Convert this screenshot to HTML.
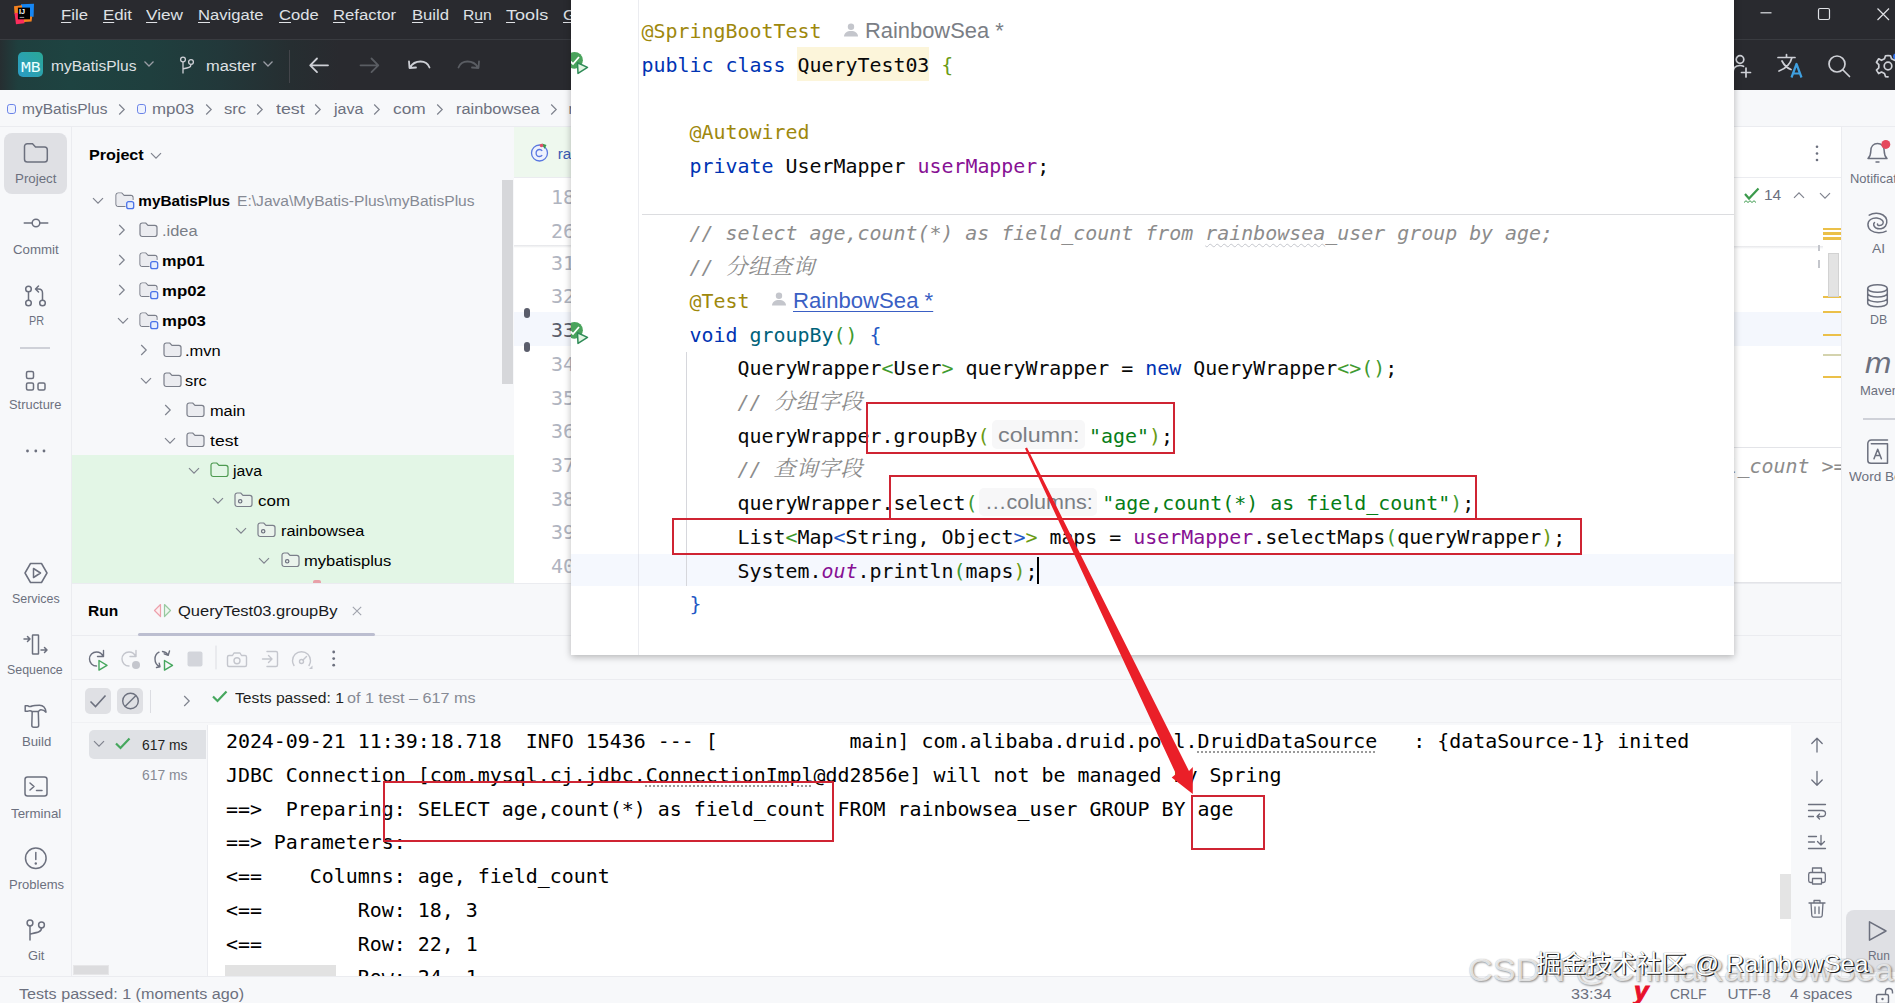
<!DOCTYPE html>
<html><head><meta charset="utf-8"><title>IDE</title>
<style>
*{box-sizing:border-box;margin:0;padding:0}
html,body{width:1895px;height:1003px;overflow:hidden;background:#f7f8fa;font-family:"Liberation Sans","Noto Sans CJK SC",sans-serif;}
#root{position:relative;width:1895px;height:1003px;overflow:hidden}
.abs{position:absolute}
.t{position:absolute;white-space:pre;line-height:1}
svg{position:absolute;overflow:visible}
.mono{font-family:"DejaVu Sans Mono","Noto Sans CJK SC",monospace;font-size:19.93px}
.an{color:#9e880d}.kw{color:#0033b3}.fd{color:#871094}.st{color:#067d17}.cm{color:#8c8c8c;font-style:italic}
.md{color:#00627a}.b1{color:#6a9b14}.b2{color:#2257c4}.b4{color:#3f9a2f}
</style></head><body><div id="root">
<div class="abs" style="left:0;top:0;width:1895px;height:90px;background:#292a2f"></div>
<div class="abs" style="left:0;top:39px;width:1895px;height:51px;background:linear-gradient(90deg,#262e31 0,#1f3f3e 18px,#1e4341 70px,#1f3f3e 150px,#22383a 220px,#262e31 290px,#292a2f 340px)"></div>
<div class="abs" style="left:0;top:39px;width:1895px;height:1px;background:#393b40"></div>
<svg style="left:0;top:0" width="40" height="30" viewBox="0 0 40 30">
<path d="M21 4.300L34 3.700L33.600 16.800L21 17.200Z" fill="#1687f5"/>
<path d="M14 6.300L22 5.300L22 14L14.600 13.800Z" fill="#f5821f"/>
<path d="M14.500 13L24.200 13L24.500 23.300L16 24.200Z" fill="#fc2d5c"/>
<path d="M24 17L32.200 16.500L31.600 21.600L24 22Z" fill="#f5821f"/>
<rect x="17.900" y="7.600" width="12.100" height="11.700" fill="#000"/>
<rect x="19.600" y="16.900" width="4.600" height="1" fill="#9a9a9a"/></svg>
<div class="t" style="left:19.0px;top:9px;font-size:6.5px;color:#fff;font-weight:bold;transform:scaleX(1.110);transform-origin:0 0;">IJ</div>
<div class="t" style="left:61.2px;top:7px;font-size:15.3px;color:#dfe1e5;transform:scaleX(1.091);transform-origin:0 0;text-underline-offset:2px;"><u>F</u>ile</div>
<div class="t" style="left:103.2px;top:7px;font-size:15.3px;color:#dfe1e5;transform:scaleX(1.101);transform-origin:0 0;text-underline-offset:2px;"><u>E</u>dit</div>
<div class="t" style="left:146.3px;top:7px;font-size:15.3px;color:#dfe1e5;transform:scaleX(1.126);transform-origin:0 0;text-underline-offset:2px;"><u>V</u>iew</div>
<div class="t" style="left:198.3px;top:7px;font-size:15.3px;color:#dfe1e5;transform:scaleX(1.085);transform-origin:0 0;text-underline-offset:2px;"><u>N</u>avigate</div>
<div class="t" style="left:279.2px;top:7px;font-size:15.3px;color:#dfe1e5;transform:scaleX(1.086);transform-origin:0 0;text-underline-offset:2px;"><u>C</u>ode</div>
<div class="t" style="left:333.0px;top:7px;font-size:15.3px;color:#dfe1e5;transform:scaleX(1.092);transform-origin:0 0;text-underline-offset:2px;"><u>R</u>efactor</div>
<div class="t" style="left:411.7px;top:7px;font-size:15.3px;color:#dfe1e5;transform:scaleX(1.088);transform-origin:0 0;text-underline-offset:2px;"><u>B</u>uild</div>
<div class="t" style="left:463.4px;top:7px;font-size:15.3px;color:#dfe1e5;transform:scaleX(1.026);transform-origin:0 0;text-underline-offset:2px;">R<u>u</u>n</div>
<div class="t" style="left:505.7px;top:7px;font-size:15.3px;color:#dfe1e5;transform:scaleX(1.182);transform-origin:0 0;text-underline-offset:2px;"><u>T</u>ools</div>
<div class="t" style="left:563.2px;top:7px;font-size:15.3px;color:#dfe1e5;transform:scaleX(1.094);transform-origin:0 0;text-underline-offset:2px;"><u>G</u></div>
<svg style="left:1755px;top:0" width="140" height="39" viewBox="0 0 140 39"><g stroke="#dfe1e5" stroke-width="1.2" fill="none"><path d="M5.5 12.8h11"/><rect x="63.5" y="8.5" width="11" height="11" rx="1.5"/><path d="M122.5 8.5l11.5 11.5M134 8.5l-11.5 11.5"/></g></svg>
<div class="abs" style="left:18px;top:52px;width:25px;height:25px;border-radius:5px;background:linear-gradient(45deg,#2b9cc6,#2aa796)"></div>
<div class="t" style="left:20.5px;top:60px;font-size:14.5px;color:#eaffff;font-family:'DejaVu Sans Mono','Noto Sans CJK SC',monospace;transform:scaleX(1.125);transform-origin:0 0;">MB</div>
<div class="t" style="left:50.5px;top:58px;font-size:15.3px;color:#dfe1e5;transform:scaleX(1.015);transform-origin:0 0;">myBatisPlus</div>
<svg style="left:143px;top:60px" width="12" height="8" viewBox="0 0 12 8"><path d="M1.5 1.5l4.5 4.5 4.5-4.5" stroke="#9a9da5" stroke-width="1.3" fill="none"/></svg>
<svg style="left:178px;top:55px" width="18" height="20" viewBox="0 0 18 20"><g stroke="#ced0d6" stroke-width="1.3" fill="none"><circle cx="5" cy="4.5" r="2.4"/><circle cx="13" cy="7" r="2.4"/><path d="M5 7v11.5M13 9.4c0 3.2-3 3.6-8 4.4"/></g></svg>
<div class="t" style="left:205.7px;top:58px;font-size:15.3px;color:#dfe1e5;transform:scaleX(1.074);transform-origin:0 0;">master</div>
<svg style="left:262px;top:60px" width="12" height="8" viewBox="0 0 12 8"><path d="M1.5 1.5l4.5 4.5 4.5-4.5" stroke="#9a9da5" stroke-width="1.3" fill="none"/></svg>
<div class="abs" style="left:289px;top:50px;width:1px;height:33px;background:#43454a"></div>
<svg style="left:305px;top:53px" width="180" height="26" viewBox="0 0 180 26"><g fill="none" stroke-width="1.8" stroke-linecap="round" stroke-linejoin="round"><path d="M23 12.3H5.5M12 5.5l-6.8 6.8 6.8 6.8" stroke="#ced0d6"/><path d="M55.5 12.3H73M66.5 5.5l6.8 6.8-6.8 6.8" stroke="#5a5d63"/><path d="M124.5 14.5c-1.5-4-5-6-9-6-4.500 0-8.500 2.500-10.500 6M104 8.500l0.500 6.500 6.500-0.500" stroke="#ced0d6"/><path d="M153.500 14.5c1.500-4 5-6 9-6 4.500 0 8.500 2.500 10.500 6M174 8.500l-0.500 6.500-6.500-0.500" stroke="#5a5d63"/></g></svg>
<svg style="left:1730px;top:50px" width="165" height="32" viewBox="0 0 165 32"><g fill="none" stroke="#ced0d6" stroke-width="1.7" stroke-linecap="round" stroke-linejoin="round">
<circle cx="10" cy="9.500" r="3.800"/><path d="M3 23c0-5 3-7.500 7-7.500 1.500 0 2.500 0.300 3.500 0.800M16 18v9M11.500 22.500h9"/>
<path d="M48 7.500h17M56.500 4.500v3M62 7.500c-1.500 6-6 11-13 13.500M52 11c2 4 5 7 9 8.500"/>
<circle cx="107" cy="14" r="8"/><path d="M113 20l6.500 6.500"/>
<circle cx="158" cy="16" r="3.800"/><path d="M158 5.500l2.500 0.300 1 3 3 1.500 2.500-1.500M158 5.500l-2.500 0.300-1 3-3 1.500-2.800-1.500-2.200 3.500 2.300 2.300v3.200l-2.300 2.300 2.200 3.500 2.800-1.500 3 1.500 1 3 2.500 0.300"/></g>
<path d="M61.500 27.500l5-13.500 5 13.500M63.300 23.500h6.400" fill="none" stroke="#3fa0e0" stroke-width="2.200" stroke-linejoin="round"/>
<circle cx="166" cy="6.500" r="3" fill="#3574f0"/></svg>
<div class="abs" style="left:0;top:90px;width:1895px;height:37px;background:#f7f8fa;border-bottom:1px solid #ebecf0"></div>
<div class="abs" style="left:6.9px;top:103.9px;width:9.6px;height:10px;border:1.4px solid #6b84e8;border-radius:2.8px;background:#eff3fd"></div>
<div class="t" style="left:22.3px;top:101px;font-size:15.3px;color:#6c707e;transform:scaleX(1.015);transform-origin:0 0;">myBatisPlus</div>
<svg style="left:118.3px;top:103px" width="8" height="13" viewBox="0 0 8 13"><path d="M1.2 1.500l5 5-5 5" stroke="#7f838e" stroke-width="1.2" fill="none"/></svg>
<div class="abs" style="left:136.9px;top:103.9px;width:9.6px;height:10px;border:1.4px solid #6b84e8;border-radius:2.8px;background:#eff3fd"></div>
<div class="t" style="left:152.4px;top:101px;font-size:15.3px;color:#6c707e;transform:scaleX(1.103);transform-origin:0 0;">mp03</div>
<svg style="left:205.3px;top:103px" width="8" height="13" viewBox="0 0 8 13"><path d="M1.2 1.500l5 5-5 5" stroke="#7f838e" stroke-width="1.2" fill="none"/></svg>
<div class="t" style="left:224.0px;top:101px;font-size:15.3px;color:#6c707e;transform:scaleX(1.084);transform-origin:0 0;">src</div>
<svg style="left:256.3px;top:103px" width="8" height="13" viewBox="0 0 8 13"><path d="M1.2 1.500l5 5-5 5" stroke="#7f838e" stroke-width="1.2" fill="none"/></svg>
<div class="t" style="left:275.5px;top:101px;font-size:15.3px;color:#6c707e;transform:scaleX(1.165);transform-origin:0 0;">test</div>
<svg style="left:314.3px;top:103px" width="8" height="13" viewBox="0 0 8 13"><path d="M1.2 1.500l5 5-5 5" stroke="#7f838e" stroke-width="1.2" fill="none"/></svg>
<div class="t" style="left:333.6px;top:101px;font-size:15.3px;color:#6c707e;transform:scaleX(1.049);transform-origin:0 0;">java</div>
<svg style="left:373.3px;top:103px" width="8" height="13" viewBox="0 0 8 13"><path d="M1.2 1.500l5 5-5 5" stroke="#7f838e" stroke-width="1.2" fill="none"/></svg>
<div class="t" style="left:393.3px;top:101px;font-size:15.3px;color:#6c707e;transform:scaleX(1.132);transform-origin:0 0;">com</div>
<svg style="left:436.3px;top:103px" width="8" height="13" viewBox="0 0 8 13"><path d="M1.2 1.500l5 5-5 5" stroke="#7f838e" stroke-width="1.2" fill="none"/></svg>
<div class="t" style="left:455.5px;top:101px;font-size:15.3px;color:#6c707e;transform:scaleX(1.068);transform-origin:0 0;">rainbowsea</div>
<svg style="left:549.5px;top:103px" width="8" height="13" viewBox="0 0 8 13"><path d="M1.2 1.500l5 5-5 5" stroke="#7f838e" stroke-width="1.2" fill="none"/></svg>
<div class="t" style="left:568.5px;top:101px;font-size:15.3px;color:#6c707e;">m</div>
<div class="abs" style="left:0;top:127px;width:72px;height:850px;background:#f7f8fa;border-right:1px solid #ebecf0"></div>
<div class="abs" style="left:4px;top:133px;width:62.5px;height:60.5px;border-radius:8px;background:#dfe0e4"></div>
<svg style="left:22px;top:141px" width="28" height="23" viewBox="0 0 28 23"><path d="M2.5 5.500c0-1.700 1.200-2.800 2.800-2.800h5.200l3 3.200h9c1.600 0 2.800 1.200 2.800 2.800v9.500c0 1.600-1.200 2.800-2.800 2.800H5.300c-1.600 0-2.800-1.200-2.800-2.800z" fill="none" stroke="#6c707e" stroke-width="1.5"/></svg>
<div class="t" style="left:14.7px;top:173px;font-size:12.7px;color:#6c707e;transform:scaleX(1.049);transform-origin:0 0;">Project</div>
<svg style="left:22px;top:215px" width="28" height="16" viewBox="0 0 28 16"><g fill="none" stroke="#6c707e" stroke-width="1.5"><circle cx="14" cy="8" r="3.800"/><path d="M1.700 8h8.500M17.800 8h8.500"/></g></svg>
<div class="t" style="left:13.3px;top:244px;font-size:12.7px;color:#6c707e;transform:scaleX(1.046);transform-origin:0 0;">Commit</div>
<svg style="left:22px;top:284px" width="28" height="24" viewBox="0 0 28 24"><g fill="none" stroke="#6c707e" stroke-width="1.5" stroke-linecap="round" stroke-linejoin="round"><circle cx="6.500" cy="5" r="2.800"/><circle cx="6.500" cy="19" r="2.800"/><circle cx="20.500" cy="19" r="2.800"/><path d="M6.500 7.800v8.400M20.500 16.200V9c0-2.500-1.500-4-4-4h-2.500M16.500 2l-3 3 3 3"/></g></svg>
<div class="t" style="left:28.6px;top:315px;font-size:12.7px;color:#6c707e;transform:scaleX(0.852);transform-origin:0 0;">PR</div>
<div class="abs" style="left:20px;top:347px;width:30px;height:2px;background:#cfd1d8"></div>
<svg style="left:24px;top:369px" width="24" height="24" viewBox="0 0 24 24"><g fill="none" stroke="#6c707e" stroke-width="1.5"><rect x="2.500" y="2.500" width="7" height="7" rx="1.500"/><rect x="2.500" y="14" width="7" height="7" rx="1.500"/><rect x="14" y="14" width="7" height="7" rx="1.500"/></g></svg>
<div class="t" style="left:9.4px;top:399px;font-size:12.7px;color:#6c707e;transform:scaleX(1.016);transform-origin:0 0;">Structure</div>
<svg style="left:25px;top:448px" width="22" height="6" viewBox="0 0 22 6"><g fill="#6c707e"><circle cx="2.500" cy="3" r="1.400"/><circle cx="10.800" cy="3" r="1.400"/><circle cx="19" cy="3" r="1.400"/></g></svg>
<svg style="left:22px;top:561px" width="28" height="24" viewBox="0 0 28 24"><g fill="none" stroke="#6c707e" stroke-width="1.500" stroke-linejoin="round"><path d="M8.500 2.500h11l5.500 9.500-5.500 9.500h-11L3 12z"/><path d="M11.500 7.500l7 4.500-7 4.500z"/></g></svg>
<div class="t" style="left:12.0px;top:593px;font-size:12.7px;color:#6c707e;transform:scaleX(0.979);transform-origin:0 0;">Services</div>
<svg style="left:22px;top:632px" width="28" height="25" viewBox="0 0 28 25"><g fill="none" stroke="#6c707e" stroke-width="1.500" stroke-linecap="round" stroke-linejoin="round"><rect x="10.500" y="3" width="6" height="19" rx="0.500"/><path d="M2 7h6M5.500 4.500L8 7l-2.500 2.500M19 18h6M22.500 15.500L25 18l-2.500 2.500"/></g></svg>
<div class="t" style="left:7.3px;top:664px;font-size:12.7px;color:#6c707e;transform:scaleX(0.975);transform-origin:0 0;">Sequence</div>
<svg style="left:22px;top:704px" width="28" height="24" viewBox="0 0 28 24"><g fill="none" stroke="#6c707e" stroke-width="1.500" stroke-linejoin="round"><path d="M3.200 1.800L6 1.800C7.500 2.800 8.500 2.800 10 2C12 1.200 15 1.200 17.500 1.200C21 1.200 23.500 3.500 24 8.200C22.500 6.500 21 5.800 19 5.800C18 5.800 17.500 6.500 16.300 7.600L10.200 7.600C9 6.600 8 6.200 6 7.200L3.200 7.200Z"/><path d="M10.200 7.600L9.800 21.200C9.800 22.500 10.500 23.200 11.800 23.200L14.700 23.200C16 23.200 16.700 22.500 16.700 21.200L16.300 7.600"/></g></svg>
<div class="t" style="left:22.2px;top:736px;font-size:12.7px;color:#6c707e;transform:scaleX(1.039);transform-origin:0 0;">Build</div>
<svg style="left:23px;top:775px" width="26" height="23" viewBox="0 0 26 23"><g fill="none" stroke="#6c707e" stroke-width="1.500" stroke-linecap="round" stroke-linejoin="round"><rect x="2" y="2" width="22" height="19" rx="2.500"/><path d="M7 8l4 3.500-4 3.500M13.500 15.500h5.500"/></g></svg>
<div class="t" style="left:10.7px;top:808px;font-size:12.7px;color:#6c707e;transform:scaleX(1.049);transform-origin:0 0;">Terminal</div>
<svg style="left:23px;top:846px" width="26" height="25" viewBox="0 0 26 25"><g fill="none" stroke="#6c707e" stroke-width="1.500" stroke-linecap="round"><circle cx="12.800" cy="12.300" r="10.300"/><path d="M12.800 6.500v7"/></g><circle cx="12.800" cy="17.500" r="1.200" fill="#6c707e"/></svg>
<div class="t" style="left:8.5px;top:879px;font-size:12.7px;color:#6c707e;transform:scaleX(1.027);transform-origin:0 0;">Problems</div>
<svg style="left:24px;top:918px" width="24" height="24" viewBox="0 0 24 24"><g fill="none" stroke="#6c707e" stroke-width="1.500" stroke-linecap="round"><circle cx="6" cy="5" r="2.900"/><circle cx="17.500" cy="7" r="2.900"/><path d="M6 8v14M17.500 10c0 4-4 4.500-11.500 6"/></g></svg>
<div class="t" style="left:28.2px;top:950px;font-size:12.7px;color:#6c707e;transform:scaleX(1.012);transform-origin:0 0;">Git</div>
<div class="abs" style="left:72px;top:127px;width:442px;height:456px;background:#f7f8fa"></div>
<div class="abs" style="left:72px;top:454.5px;width:442px;height:128px;background:#e3f6e6"></div>
<div class="abs" style="left:513.5px;top:127px;width:1px;height:456px;background:#ebecf0"></div>
<div class="t" style="left:88.5px;top:147px;font-size:15px;color:#000;font-weight:bold;transform:scaleX(1.076);transform-origin:0 0;">Project</div>
<svg style="left:149.5px;top:152.0px" width="12" height="8" viewBox="0 0 12 8"><path d="M1 1.200l5 5 5-5" stroke="#7f838e" stroke-width="1.200" fill="none"/></svg>
<div class="abs" style="left:501.5px;top:180px;width:11px;height:204px;background:#d6d7da"></div>
<svg style="left:92.4px;top:196.5px" width="12" height="8" viewBox="0 0 12 8"><path d="M1 1.200l5 5 5-5" stroke="#7f838e" stroke-width="1.200" fill="none"/></svg>
<svg style="left:114.5px;top:192.2px" width="20" height="18" viewBox="0 0 20 18"><path d="M10.500 14.500H3.200c-1.200 0-2.200-1-2.200-2.200V3.200c0-1.200 0.900-2.200 2.200-2.200h3.600l2.200 2.400h6.800c1.200 0 2.200 1 2.200 2.200v2.400" fill="none" stroke="#7b7f8a" stroke-width="1.200"/><path d="M1.600 3.200c0-0.900 0.700-1.600 1.600-1.600h3.300l2.200 2.400h7.100c0.900 0 1.600 0.700 1.600 1.600v3.400h-6.400v4.900H3.200c-0.900 0-1.600-0.700-1.600-1.600z" fill="#ebecf0"/><rect x="11.700" y="9.700" width="7" height="7" rx="2" fill="#e6edfd" stroke="#4a72e8" stroke-width="1.300"/></svg>
<div class="t" style="left:138.3px;top:193px;font-size:15.3px;color:#000;font-weight:bold;">myBatisPlus</div>
<svg style="left:117.7px;top:224px" width="8" height="12" viewBox="0 0 8 12"><path d="M1.200 1l5 5-5 5" stroke="#7f838e" stroke-width="1.200" fill="none"/></svg>
<svg style="left:138.5px;top:222.2px" width="20" height="18" viewBox="0 0 20 18"><path d="M1 3.200c0-1.200 0.900-2.200 2.200-2.200h3.600l2.200 2.400h6.800c1.200 0 2.200 1 2.200 2.200v6.700c0 1.200-1 2.200-2.200 2.200H3.200c-1.200 0-2.200-1-2.200-2.200z" fill="#ebecf0" stroke="#7b7f8a" stroke-width="1.200"/></svg>
<div class="t" style="left:162.3px;top:223px;font-size:15.3px;color:#7a7e87;transform:scaleX(1.074);transform-origin:0 0;">.idea</div>
<svg style="left:117.7px;top:254px" width="8" height="12" viewBox="0 0 8 12"><path d="M1.200 1l5 5-5 5" stroke="#7f838e" stroke-width="1.200" fill="none"/></svg>
<svg style="left:138.5px;top:252.2px" width="20" height="18" viewBox="0 0 20 18"><path d="M10.500 14.500H3.200c-1.200 0-2.200-1-2.200-2.200V3.200c0-1.200 0.900-2.200 2.200-2.200h3.600l2.200 2.400h6.800c1.200 0 2.200 1 2.200 2.200v2.400" fill="none" stroke="#7b7f8a" stroke-width="1.200"/><path d="M1.600 3.200c0-0.900 0.700-1.600 1.600-1.600h3.300l2.200 2.400h7.100c0.900 0 1.600 0.700 1.600 1.600v3.400h-6.400v4.900H3.200c-0.900 0-1.600-0.700-1.600-1.600z" fill="#ebecf0"/><rect x="11.700" y="9.700" width="7" height="7" rx="2" fill="#e6edfd" stroke="#4a72e8" stroke-width="1.300"/></svg>
<div class="t" style="left:162.3px;top:253px;font-size:15.3px;color:#000;font-weight:bold;transform:scaleX(1.064);transform-origin:0 0;">mp01</div>
<svg style="left:117.7px;top:284px" width="8" height="12" viewBox="0 0 8 12"><path d="M1.200 1l5 5-5 5" stroke="#7f838e" stroke-width="1.200" fill="none"/></svg>
<svg style="left:138.5px;top:282.2px" width="20" height="18" viewBox="0 0 20 18"><path d="M10.500 14.500H3.200c-1.200 0-2.200-1-2.200-2.200V3.200c0-1.200 0.900-2.200 2.200-2.200h3.600l2.200 2.400h6.800c1.200 0 2.200 1 2.200 2.200v2.400" fill="none" stroke="#7b7f8a" stroke-width="1.200"/><path d="M1.600 3.200c0-0.900 0.700-1.600 1.600-1.600h3.300l2.200 2.400h7.100c0.900 0 1.600 0.700 1.600 1.600v3.400h-6.400v4.900H3.200c-0.900 0-1.600-0.700-1.600-1.600z" fill="#ebecf0"/><rect x="11.700" y="9.700" width="7" height="7" rx="2" fill="#e6edfd" stroke="#4a72e8" stroke-width="1.300"/></svg>
<div class="t" style="left:162.3px;top:283px;font-size:15.3px;color:#000;font-weight:bold;transform:scaleX(1.096);transform-origin:0 0;">mp02</div>
<svg style="left:116.9px;top:316.5px" width="12" height="8" viewBox="0 0 12 8"><path d="M1 1.200l5 5 5-5" stroke="#7f838e" stroke-width="1.200" fill="none"/></svg>
<svg style="left:138.5px;top:312.2px" width="20" height="18" viewBox="0 0 20 18"><path d="M10.500 14.500H3.200c-1.200 0-2.200-1-2.200-2.200V3.200c0-1.200 0.900-2.200 2.200-2.200h3.600l2.200 2.400h6.800c1.200 0 2.200 1 2.200 2.200v2.400" fill="none" stroke="#7b7f8a" stroke-width="1.200"/><path d="M1.600 3.200c0-0.900 0.700-1.600 1.600-1.600h3.300l2.200 2.400h7.100c0.900 0 1.600 0.700 1.600 1.600v3.400h-6.400v4.900H3.200c-0.900 0-1.600-0.700-1.600-1.600z" fill="#ebecf0"/><rect x="11.700" y="9.700" width="7" height="7" rx="2" fill="#e6edfd" stroke="#4a72e8" stroke-width="1.300"/></svg>
<div class="t" style="left:162.3px;top:313px;font-size:15.3px;color:#000;font-weight:bold;transform:scaleX(1.096);transform-origin:0 0;">mp03</div>
<svg style="left:140.3px;top:344px" width="8" height="12" viewBox="0 0 8 12"><path d="M1.200 1l5 5-5 5" stroke="#7f838e" stroke-width="1.200" fill="none"/></svg>
<svg style="left:162.8px;top:342.2px" width="20" height="18" viewBox="0 0 20 18"><path d="M1 3.200c0-1.200 0.900-2.200 2.200-2.200h3.600l2.200 2.400h6.800c1.200 0 2.200 1 2.200 2.200v6.700c0 1.200-1 2.200-2.200 2.200H3.200c-1.200 0-2.200-1-2.200-2.200z" fill="#ebecf0" stroke="#7b7f8a" stroke-width="1.200"/></svg>
<div class="t" style="left:185.2px;top:343px;font-size:15.3px;color:#000;transform:scaleX(1.077);transform-origin:0 0;">.mvn</div>
<svg style="left:139.8px;top:376.5px" width="12" height="8" viewBox="0 0 12 8"><path d="M1 1.200l5 5 5-5" stroke="#7f838e" stroke-width="1.200" fill="none"/></svg>
<svg style="left:162.8px;top:372.2px" width="20" height="18" viewBox="0 0 20 18"><path d="M1 3.200c0-1.200 0.900-2.200 2.200-2.200h3.600l2.200 2.400h6.800c1.200 0 2.200 1 2.200 2.200v6.700c0 1.200-1 2.200-2.200 2.200H3.200c-1.200 0-2.200-1-2.200-2.200z" fill="#ebecf0" stroke="#7b7f8a" stroke-width="1.200"/></svg>
<div class="t" style="left:185.2px;top:373px;font-size:15.3px;color:#000;transform:scaleX(1.069);transform-origin:0 0;">src</div>
<svg style="left:164.20000000000002px;top:404px" width="8" height="12" viewBox="0 0 8 12"><path d="M1.200 1l5 5-5 5" stroke="#7f838e" stroke-width="1.200" fill="none"/></svg>
<svg style="left:186px;top:402.2px" width="20" height="18" viewBox="0 0 20 18"><path d="M1 3.200c0-1.200 0.900-2.200 2.200-2.200h3.600l2.200 2.400h6.800c1.200 0 2.200 1 2.200 2.200v6.700c0 1.200-1 2.200-2.200 2.200H3.200c-1.200 0-2.200-1-2.200-2.200z" fill="#ebecf0" stroke="#7b7f8a" stroke-width="1.200"/></svg>
<div class="t" style="left:209.5px;top:403px;font-size:15.3px;color:#000;transform:scaleX(1.068);transform-origin:0 0;">main</div>
<svg style="left:163.5px;top:436.5px" width="12" height="8" viewBox="0 0 12 8"><path d="M1 1.200l5 5 5-5" stroke="#7f838e" stroke-width="1.200" fill="none"/></svg>
<svg style="left:186px;top:432.2px" width="20" height="18" viewBox="0 0 20 18"><path d="M1 3.200c0-1.200 0.900-2.200 2.200-2.200h3.600l2.200 2.400h6.800c1.200 0 2.200 1 2.200 2.200v6.700c0 1.200-1 2.200-2.200 2.200H3.200c-1.200 0-2.200-1-2.200-2.200z" fill="#ebecf0" stroke="#7b7f8a" stroke-width="1.200"/></svg>
<div class="t" style="left:209.5px;top:433px;font-size:15.3px;color:#000;transform:scaleX(1.149);transform-origin:0 0;">test</div>
<svg style="left:187.6px;top:466.5px" width="12" height="8" viewBox="0 0 12 8"><path d="M1 1.200l5 5 5-5" stroke="#7f838e" stroke-width="1.200" fill="none"/></svg>
<svg style="left:209.8px;top:462.2px" width="20" height="18" viewBox="0 0 20 18"><path d="M1 3.200c0-1.200 0.900-2.200 2.200-2.200h3.600l2.200 2.400h6.800c1.200 0 2.200 1 2.200 2.200v6.700c0 1.200-1 2.200-2.200 2.200H3.200c-1.200 0-2.200-1-2.200-2.200z" fill="#e3f6e6" stroke="#4e9a51" stroke-width="1.200"/></svg>
<div class="t" style="left:233.0px;top:463px;font-size:15.3px;color:#000;transform:scaleX(1.031);transform-origin:0 0;">java</div>
<svg style="left:211.5px;top:496.5px" width="12" height="8" viewBox="0 0 12 8"><path d="M1 1.200l5 5 5-5" stroke="#7f838e" stroke-width="1.200" fill="none"/></svg>
<svg style="left:233.6px;top:492.2px" width="20" height="18" viewBox="0 0 20 18"><path d="M1 3.200c0-1.200 0.900-2.200 2.200-2.200h3.600l2.200 2.400h6.800c1.200 0 2.200 1 2.200 2.200v6.700c0 1.200-1 2.200-2.200 2.200H3.200c-1.200 0-2.200-1-2.200-2.200z" fill="#eaf3ec" stroke="#7b7f8a" stroke-width="1.200"/><circle cx="6.200" cy="9.300" r="1.700" fill="none" stroke="#6c707e" stroke-width="1.200"/></svg>
<div class="t" style="left:257.6px;top:493px;font-size:15.3px;color:#000;transform:scaleX(1.111);transform-origin:0 0;">com</div>
<svg style="left:234.6px;top:526.5px" width="12" height="8" viewBox="0 0 12 8"><path d="M1 1.200l5 5 5-5" stroke="#7f838e" stroke-width="1.200" fill="none"/></svg>
<svg style="left:257.3px;top:522.2px" width="20" height="18" viewBox="0 0 20 18"><path d="M1 3.200c0-1.200 0.900-2.200 2.200-2.200h3.600l2.200 2.400h6.800c1.200 0 2.200 1 2.200 2.200v6.700c0 1.200-1 2.200-2.200 2.200H3.200c-1.200 0-2.200-1-2.200-2.200z" fill="#eaf3ec" stroke="#7b7f8a" stroke-width="1.200"/><circle cx="6.200" cy="9.300" r="1.700" fill="none" stroke="#6c707e" stroke-width="1.200"/></svg>
<div class="t" style="left:280.7px;top:523px;font-size:15.3px;color:#000;transform:scaleX(1.064);transform-origin:0 0;">rainbowsea</div>
<svg style="left:258.4px;top:556.5px" width="12" height="8" viewBox="0 0 12 8"><path d="M1 1.200l5 5 5-5" stroke="#7f838e" stroke-width="1.200" fill="none"/></svg>
<svg style="left:281px;top:552.2px" width="20" height="18" viewBox="0 0 20 18"><path d="M1 3.200c0-1.200 0.900-2.200 2.200-2.200h3.600l2.200 2.400h6.800c1.200 0 2.200 1 2.200 2.200v6.700c0 1.200-1 2.200-2.200 2.200H3.200c-1.200 0-2.200-1-2.200-2.200z" fill="#eaf3ec" stroke="#7b7f8a" stroke-width="1.200"/><circle cx="6.200" cy="9.300" r="1.700" fill="none" stroke="#6c707e" stroke-width="1.200"/></svg>
<div class="t" style="left:304.4px;top:553px;font-size:15.3px;color:#000;transform:scaleX(1.081);transform-origin:0 0;">mybatisplus</div>
<div class="t" style="left:236.5px;top:193px;font-size:15.3px;color:#868a94;transform:scaleX(1.020);transform-origin:0 0;">E:\Java\MyBatis-Plus\myBatisPlus</div>
<div class="abs" style="left:313px;top:580px;width:8px;height:3px;background:#e8a0a8;border-radius:2px 2px 0 0"></div>
<div class="abs" style="left:514px;top:127px;width:60px;height:51px;background:#eef8ee;border-bottom:1px solid #ebecf0"></div>
<div class="abs" style="left:514px;top:178px;width:60px;height:405px;background:#fff"></div>
<div class="abs" style="left:514px;top:311.5px;width:60px;height:34.5px;background:#f4f7fd"></div>
<div class="abs" style="left:514px;top:245px;width:60px;height:3px;background:linear-gradient(#e4e5e8,#fff)"></div>
<svg style="left:529px;top:142px" width="22" height="22" viewBox="0 0 22 22"><circle cx="10.500" cy="11" r="8" fill="#eef2fd" stroke="#5a78e0" stroke-width="1.300"/><path d="M13.200 8.800c-0.600-0.800-1.500-1.300-2.700-1.300-2 0-3.400 1.500-3.400 3.500s1.400 3.500 3.400 3.500c1.200 0 2.100-0.500 2.700-1.300" fill="none" stroke="#5a78e0" stroke-width="1.300"/><path d="M13 1.500l4.500 1.500-2 4z" fill="#3b9a4c"/><circle cx="12.500" cy="3.500" r="1.800" fill="#e0506a"/></svg>
<div class="t" style="left:557.7px;top:146px;font-size:15.3px;color:#3b5bb5;">ra</div>
<div class="t" style="left:551.0px;top:188px;font-size:19.93px;color:#b0b4bf;font-family:'DejaVu Sans Mono','Noto Sans CJK SC',monospace;">18</div>
<div class="t" style="left:551.0px;top:222px;font-size:19.93px;color:#b0b4bf;font-family:'DejaVu Sans Mono','Noto Sans CJK SC',monospace;">26</div>
<div class="t" style="left:551.0px;top:254px;font-size:19.93px;color:#b0b4bf;font-family:'DejaVu Sans Mono','Noto Sans CJK SC',monospace;">31</div>
<div class="t" style="left:551.0px;top:287px;font-size:19.93px;color:#b0b4bf;font-family:'DejaVu Sans Mono','Noto Sans CJK SC',monospace;">32</div>
<div class="t" style="left:551.0px;top:321px;font-size:19.93px;color:#5a5d6b;font-family:'DejaVu Sans Mono','Noto Sans CJK SC',monospace;">33</div>
<div class="t" style="left:551.0px;top:355px;font-size:19.93px;color:#b0b4bf;font-family:'DejaVu Sans Mono','Noto Sans CJK SC',monospace;">34</div>
<div class="t" style="left:551.0px;top:389px;font-size:19.93px;color:#b0b4bf;font-family:'DejaVu Sans Mono','Noto Sans CJK SC',monospace;">35</div>
<div class="t" style="left:551.0px;top:422px;font-size:19.93px;color:#b0b4bf;font-family:'DejaVu Sans Mono','Noto Sans CJK SC',monospace;">36</div>
<div class="t" style="left:551.0px;top:456px;font-size:19.93px;color:#b0b4bf;font-family:'DejaVu Sans Mono','Noto Sans CJK SC',monospace;">37</div>
<div class="t" style="left:551.0px;top:490px;font-size:19.93px;color:#b0b4bf;font-family:'DejaVu Sans Mono','Noto Sans CJK SC',monospace;">38</div>
<div class="t" style="left:551.0px;top:523px;font-size:19.93px;color:#b0b4bf;font-family:'DejaVu Sans Mono','Noto Sans CJK SC',monospace;">39</div>
<div class="t" style="left:551.0px;top:557px;font-size:19.93px;color:#b0b4bf;font-family:'DejaVu Sans Mono','Noto Sans CJK SC',monospace;">40</div>
<div class="abs" style="left:524px;top:308px;width:6px;height:9.500px;border-radius:3px;background:#5a5d6b"></div>
<div class="abs" style="left:524px;top:341.5px;width:6px;height:10px;border-radius:3px;background:#5a5d6b"></div>
<div class="abs" style="left:1700px;top:127px;width:141px;height:51px;background:#fff;border-bottom:1px solid #ebecf0"></div>
<div class="abs" style="left:1700px;top:178px;width:141px;height:405px;background:#fff"></div>
<div class="abs" style="left:1700px;top:311.5px;width:141px;height:34.500px;background:#f4f7fd"></div>
<div class="abs" style="left:1700px;top:246px;width:123px;height:3px;background:linear-gradient(#e6e7ea,#fff)"></div>
<div class="abs" style="left:1700px;top:447px;width:141px;height:1px;background:#e3e4e8"></div>
<div class="abs" style="left:1700px;top:582px;width:141px;height:1px;background:#e3e4e8"></div>
<svg style="left:1814px;top:144px" width="6" height="19" viewBox="0 0 6 19"><g fill="#6c707e"><circle cx="3" cy="2.800" r="1.300"/><circle cx="3" cy="9.500" r="1.300"/><circle cx="3" cy="16" r="1.300"/></g></svg>
<svg style="left:1743px;top:186px" width="18" height="20" viewBox="0 0 18 20"><path d="M2 8l4 4.500L15.500 2.500" fill="none" stroke="#3b9a4c" stroke-width="2.200"/><path d="M1 16.500l2-1.800 2 1.800 2-1.800 2 1.800 2-1.800 2 1.800" fill="none" stroke="#3b9a4c" stroke-width="1"/></svg>
<div class="t" style="left:1764.3px;top:187px;font-size:15.3px;color:#6c707e;transform:scaleX(1.012);transform-origin:0 0;">14</div>
<svg style="left:1793px;top:191px" width="12" height="8" viewBox="0 0 12 8"><path d="M1 6.800l5-5 5 5" stroke="#7f838e" stroke-width="1.200" fill="none"/></svg>
<svg style="left:1819px;top:192.0px" width="12" height="8" viewBox="0 0 12 8"><path d="M1 1.200l5 5 5-5" stroke="#7f838e" stroke-width="1.200" fill="none"/></svg>
<div class="abs" style="left:1823px;top:227.5px;width:17.500px;height:2.500px;background:#ebc049"></div>
<div class="abs" style="left:1823px;top:232.4px;width:17.500px;height:2.500px;background:#ebc049"></div>
<div class="abs" style="left:1823px;top:237.4px;width:17.500px;height:2.500px;background:#ebc049"></div>
<div class="abs" style="left:1823px;top:295.8px;width:17.500px;height:2.500px;background:#ebc049"></div>
<div class="abs" style="left:1823px;top:310.8px;width:17.500px;height:2.500px;background:#ebc049"></div>
<div class="abs" style="left:1823px;top:333.8px;width:17.500px;height:2.500px;background:#ebc049"></div>
<div class="abs" style="left:1823px;top:375.8px;width:17.500px;height:2.500px;background:#ebc049"></div>
<div class="abs" style="left:1823px;top:354px;width:17.500px;height:2px;background:#d4d3ae"></div>
<div class="abs" style="left:1817.500px;top:245px;width:2.500px;height:6px;background:#c4c6cc"></div>
<div class="abs" style="left:1817.500px;top:260px;width:2.500px;height:8px;background:#c4c6cc"></div>
<div class="abs" style="left:1828px;top:252.500px;width:10.500px;height:44px;background:#e3e3e3;border:1px solid #d2d2d2"></div>
<div class="t" style="left:1725.5px;top:457px;font-size:19.93px;color:#8c8c8c;font-family:'DejaVu Sans Mono','Noto Sans CJK SC',monospace;font-style:italic;width:115.500px;overflow:hidden;padding-bottom:8px;">l_count &gt;=</div>
<div class="abs" style="left:1841px;top:127px;width:54px;height:850px;background:#f7f8fa;border-left:1px solid #ebecf0"></div>
<svg style="left:1864px;top:138px" width="28" height="28" viewBox="0 0 28 28"><g fill="none" stroke="#6c707e" stroke-width="1.500" stroke-linejoin="round"><path d="M4 20.500c2-2 2.800-4 2.800-7.500 0-4.500 2.800-7.500 6.700-7.500s6.700 3 6.700 7.500c0 3.500 0.800 5.500 2.800 7.500z"/><path d="M11.500 24h4"/></g><circle cx="21.800" cy="6.400" r="4.500" fill="#e5495d"/></svg>
<div class="t" style="left:1849.6px;top:173px;font-size:12.7px;color:#6c707e;transform:scaleX(1.020);transform-origin:0 0;">Notifications</div>
<svg style="left:1865px;top:212px" width="24" height="24" viewBox="0 0 24 24"><g fill="none" stroke="#6c707e" stroke-width="1.500" stroke-linecap="round"><path d="M4.200 3.100C8 1 14 0.500 18 3C22 5.500 23 10 20.500 14C18.500 17 14 17.500 11 16C8.500 14.500 8 12 9.500 10.500"/><path d="M21.200 19.200C17 21.500 10 21.500 6 18.500C2 15.500 2 10 5.500 7.500C9 5 15 5.500 17.500 8.500C19.500 11 17.500 13.500 14.500 13.500C13 13.500 12.300 12.800 12.500 12"/></g></svg>
<div class="t" style="left:1872.0px;top:243px;font-size:12.7px;color:#6c707e;transform:scaleX(1.085);transform-origin:0 0;">AI</div>
<svg style="left:1865px;top:283px" width="25" height="26" viewBox="0 0 25 26"><g fill="none" stroke="#6c707e" stroke-width="1.500"><ellipse cx="12.500" cy="5.500" rx="9.800" ry="3.800"/><path d="M2.700 5.500v14.500c0 2.100 4.400 3.800 9.800 3.800s9.800-1.700 9.800-3.800V5.500M2.700 10.300c0 2.100 4.400 3.800 9.800 3.800s9.800-1.700 9.800-3.800M2.700 15.200c0 2.100 4.400 3.800 9.800 3.800s9.800-1.700 9.800-3.800"/></g></svg>
<div class="t" style="left:1869.6px;top:314px;font-size:12.7px;color:#6c707e;transform:scaleX(0.977);transform-origin:0 0;">DB</div>
<div class="t" style="left:1865.0px;top:349px;font-size:29px;color:#6c707e;font-style:italic;transform:scaleX(1.089);transform-origin:0 0;">m</div>
<div class="t" style="left:1859.6px;top:385px;font-size:12.7px;color:#6c707e;transform:scaleX(1.024);transform-origin:0 0;">Maven</div>
<div class="abs" style="left:1863px;top:418px;width:32px;height:2px;background:#cfd1d8"></div>
<svg style="left:1865px;top:437px" width="26" height="28" viewBox="0 0 26 28"><g fill="none" stroke="#6c707e" stroke-width="1.500" stroke-linejoin="round" stroke-linecap="round"><path d="M22.500 3H6.500C4.200 3 2.800 4.400 2.800 6.600V23.200C2.800 25 4 26.300 6 26.300H22.500V6.800H6.300"/><path d="M9 21.800l3.700-9.600 3.700 9.600M10.300 18.500h4.800"/></g></svg>
<div class="t" style="left:1849.3px;top:471px;font-size:12.7px;color:#6c707e;transform:scaleX(1.072);transform-origin:0 0;">Word Book</div>
<div class="abs" style="left:1846px;top:910px;width:60px;height:62px;border-radius:8px;background:#dfe0e4"></div>
<svg style="left:1866px;top:919px" width="24" height="24" viewBox="0 0 24 24"><path d="M3.500 2.800l16.500 9.200-16.500 9.200z" fill="none" stroke="#6c707e" stroke-width="1.500" stroke-linejoin="round"/></svg>
<div class="t" style="left:1867.6px;top:950px;font-size:12.7px;color:#6c707e;transform:scaleX(0.941);transform-origin:0 0;">Run</div>
<div class="abs" style="left:72px;top:583px;width:1769px;height:393px;background:#f7f8fa;border-top:1px solid #ebecf0"></div>
<div class="t" style="left:88.4px;top:603px;font-size:15px;color:#000;font-weight:bold;transform:scaleX(1.035);transform-origin:0 0;">Run</div>
<svg style="left:153px;top:603px" width="20" height="15" viewBox="0 0 20 15"><path d="M7.500 1.500L1.500 7.500l6 6z" fill="#fdeef0" stroke="#eda0ab" stroke-width="1.200" stroke-linejoin="round"/><path d="M11.500 1.500l6 6-6 6z" fill="#eef7ef" stroke="#98c9a0" stroke-width="1.200" stroke-linejoin="round"/></svg>
<div class="t" style="left:178.3px;top:603px;font-size:15.3px;color:#1a1b1e;transform:scaleX(1.078);transform-origin:0 0;">QueryTest03.groupBy</div>
<svg style="left:352px;top:606px" width="10" height="10" viewBox="0 0 10 10"><path d="M0.800 0.800l8.400 8.400M9.200 0.800L0.800 9.200" stroke="#a0a3ad" stroke-width="1.100"/></svg>
<div class="abs" style="left:72px;top:635px;width:1769px;height:1px;background:#ebecf0"></div>
<div class="abs" style="left:138px;top:632.5px;width:237px;height:3px;border-radius:1.500px;background:#bcbed0"></div>
<svg style="left:86px;top:645px" width="260" height="28" viewBox="0 0 260 28"><g fill="none" stroke-width="1.400" stroke-linecap="round" stroke-linejoin="round">
<path d="M10.500 21c-4 0-7-3.200-7-7s3-7 7-7c3 0 5.500 1.700 6.500 4.300M17.500 5.500v6h-6" stroke="#6c707e"/>
<path d="M13 15.500l8 4.800-8 4.800z" stroke="#46a75e" fill="#f7f8fa"/>
<path d="M43 21c-4 0-7-3.200-7-7s3-7 7-7c3 0 5.500 1.700 6.500 4.300M50 5.500v6h-6" stroke="#c4c6cd"/>
<circle cx="50" cy="20" r="4" fill="#c4c6cd" stroke="none"/>
<path d="M73.500 21.500c-3-1.500-4.500-4-4.500-7.500 0-3 1.500-5.500 4-6.800M70.500 22.500l3.500-0.800-0.800-3.500M76.500 6.500c2.500 0.300 4.500 1.500 5.500 3.500M83.500 6l-1.300 4.300-4-1.500" stroke="#6c707e"/>
<path d="M78.500 15.500l8 4.800-8 4.800z" stroke="#46a75e" fill="#f7f8fa"/>
<rect x="101.500" y="6.500" width="15" height="15" rx="2" fill="#d3d5db" stroke="none"/>
<path d="M130 1v23" stroke="#dcdde2" stroke-width="1"/>
<path d="M143 10.500h3.500l1.500-2.500h6l1.500 2.500h3.500c0.800 0 1.500 0.700 1.500 1.500v8c0 0.800-0.700 1.500-1.500 1.500H143c-0.800 0-1.500-0.700-1.500-1.500v-8c0-0.800 0.700-1.500 1.500-1.500z" stroke="#c4c6cd"/><circle cx="151" cy="15.800" r="3" stroke="#c4c6cd"/>
<path d="M181 6.500h9c0.800 0 1.500 0.700 1.500 1.500v12c0 0.800-0.700 1.500-1.500 1.500h-9M176.500 14h9.500M182.500 10.500L186 14l-3.500 3.500" stroke="#c4c6cd"/>
<path d="M208 20.500c-1-1.500-1.500-3-1.500-4.800 0-5 4-9 9-9s9 4 9 9c0 1.800-0.500 3.300-1.500 4.800" stroke="#c4c6cd"/><circle cx="215.500" cy="16.500" r="2" stroke="#c4c6cd"/><path d="M217 15l3.500-3.500" stroke="#c4c6cd"/><path d="M226.500 20.500v3.500h-3.500z" fill="#c4c6cd" stroke="none"/>
</g><g fill="#6c707e"><circle cx="247.700" cy="7" r="1.400"/><circle cx="247.700" cy="13.600" r="1.400"/><circle cx="247.700" cy="20.200" r="1.400"/></g></svg>
<div class="abs" style="left:72px;top:679px;width:1769px;height:1px;background:#ebecf0"></div>
<div class="abs" style="left:85px;top:687.5px;width:26px;height:26.500px;border-radius:5px;background:#dfe0e4"></div>
<div class="abs" style="left:116.700px;top:687.5px;width:26.700px;height:26.500px;border-radius:5px;background:#dfe0e4"></div>
<svg style="left:88px;top:692px" width="20" height="18" viewBox="0 0 20 18"><path d="M2.500 9.500l5 5L17.500 3.500" fill="none" stroke="#6c707e" stroke-width="1.600"/></svg>
<svg style="left:121px;top:691px" width="20" height="20" viewBox="0 0 20 20"><g fill="none" stroke="#6c707e" stroke-width="1.400"><circle cx="9.500" cy="10" r="7.800"/><path d="M15 4.500L4 15.500"/></g></svg>
<div class="abs" style="left:150px;top:690px;width:1px;height:23px;background:#dcdde2"></div>
<svg style="left:183px;top:695px" width="8" height="12" viewBox="0 0 8 12"><path d="M1.200 1l5 5-5 5" stroke="#7f838e" stroke-width="1.200" fill="none"/></svg>
<svg style="left:211px;top:689px" width="18" height="15" viewBox="0 0 18 15"><path d="M2 7.500l4.500 4.500L15.500 2.500" fill="none" stroke="#46a75e" stroke-width="2.200"/></svg>
<div class="t" style="left:234.8px;top:690px;font-size:15.3px;color:#1e1f22;transform:scaleX(1.024);transform-origin:0 0;">Tests passed: 1</div>
<div class="t" style="left:347.0px;top:690px;font-size:15.3px;color:#868a94;transform:scaleX(1.058);transform-origin:0 0;">of 1 test – 617 ms</div>
<div class="abs" style="left:72px;top:722px;width:1769px;height:1px;background:#f0f1f4"></div>
<div class="abs" style="left:88.500px;top:730px;width:117.500px;height:28.500px;border-radius:5px 0 0 5px;background:#dfe1e5"></div>
<svg style="left:93px;top:740px" width="12" height="8" viewBox="0 0 12 8"><path d="M1 1.200l5 5 5-5" stroke="#7f838e" stroke-width="1.200" fill="none"/></svg>
<svg style="left:114px;top:736px" width="18" height="15" viewBox="0 0 18 15"><path d="M2 7.500l4.500 4.500L15.500 2.500" fill="none" stroke="#46a75e" stroke-width="2.200"/></svg>
<div class="t" style="left:142.4px;top:738px;font-size:14.5px;color:#1e1f22;transform:scaleX(0.958);transform-origin:0 0;">617 ms</div>
<div class="t" style="left:142.4px;top:768px;font-size:14.5px;color:#868a94;transform:scaleX(0.958);transform-origin:0 0;">617 ms</div>
<div class="abs" style="left:73px;top:964.500px;width:36px;height:10.500px;background:#dcdcde;border:1px solid #e6e6e8"></div>
<div class="abs" style="left:207px;top:724.5px;width:1584px;height:251.500px;background:#fff;border-left:1px solid #ebecf0"></div>
<div class="abs" style="left:208px;top:725px;width:1583px;height:251px;overflow:hidden">
<div class="t mono" style="left:17.900000000000006px;top:7.0px;color:#000">2024-09-21 11:39:18.718  INFO 15436 --- [           main] com.alibaba.druid.pool.<span style="text-decoration:underline dotted #9a9a9a 1.500px;text-underline-offset:3px">DruidDataSource</span>   : {dataSource-1} inited</div>
<div class="t mono" style="left:17.900000000000006px;top:41.0px;color:#000">JDBC Connection [com.mysql.cj.jdbc.<span style="text-decoration:underline dotted #9a9a9a 1.500px;text-underline-offset:3px">ConnectionImpl</span>@dd2856e] will not be managed by Spring</div>
<div class="t mono" style="left:17.900000000000006px;top:75.0px;color:#000">==&gt;  Preparing: SELECT age,count(*) as field_count FROM rainbowsea_user GROUP BY age</div>
<div class="t mono" style="left:17.900000000000006px;top:108.0px;color:#000">==&gt; Parameters: </div>
<div class="t mono" style="left:17.900000000000006px;top:142.0px;color:#000">&lt;==    Columns: age, field_count</div>
<div class="t mono" style="left:17.900000000000006px;top:176.0px;color:#000">&lt;==        Row: 18, 3</div>
<div class="t mono" style="left:17.900000000000006px;top:210.0px;color:#000">&lt;==        Row: 22, 1</div>
<div class="t mono" style="left:17.900000000000006px;top:243.0px;color:#000">&lt;==        Row: 24, 1</div>
<div class="abs" style="left:17px;top:239.500px;width:110.500px;height:11.500px;background:#e2e2e2"></div>
</div>
<div class="abs" style="left:1779.500px;top:874px;width:11.500px;height:45px;background:#e4e4e4"></div>
<svg style="left:1805px;top:732px" width="24" height="190" viewBox="0 0 24 190"><g fill="none" stroke="#6c707e" stroke-width="1.300" stroke-linecap="round" stroke-linejoin="round">
<path d="M12 20V6.500M6.800 11.500L12 6.300l5.200 5.200"/>
<path d="M12 39.500V53M6.800 48L12 53.200l5.200-5.200"/>
<path d="M3.500 72.500h17M3.500 78.500h13.500c2 0 3.500 1.200 3.500 3s-1.500 3-3.500 3h-4.500M3.500 84.500h5M14.500 82l-2.500 2.500 2.500 2.500"/>
<path d="M3.500 104.500h8M3.500 110h6M3.500 116.500h17M16 103.500v9M12.500 109.500L16 113l3.500-3.500"/>
<path d="M7.500 140.500v-4.500h9v4.500M7.500 150.500h-2c-1 0-1.800-0.800-1.800-1.800v-6.400c0-1 0.800-1.800 1.800-1.800h13c1 0 1.800 0.800 1.800 1.800v6.400c0 1-0.800 1.800-1.800 1.800h-2M7.500 146.500h9v5.500h-9z"/>
<path d="M4 171h16M9 171v-2.500h6v2.500M6 171l0.800 12.500c0.100 1 0.800 1.700 1.800 1.700h6.800c1 0 1.700-0.700 1.800-1.700L18 171M10 175v6.500M14 175v6.500"/>
</g></svg>
<div class="abs" style="left:0;top:976px;width:1895px;height:27px;background:#f7f8fa;border-top:1px solid #ebecf0"></div>
<div class="t" style="left:18.8px;top:986px;font-size:15.3px;color:#6c707e;transform:scaleX(1.055);transform-origin:0 0;">Tests passed: 1 (moments ago)</div>
<div class="t" style="left:1570.5px;top:986px;font-size:15.3px;color:#6c707e;transform:scaleX(1.059);transform-origin:0 0;">33:34</div>
<div class="t" style="left:1633.5px;top:979px;font-size:25px;color:#e8102a;font-weight:bold;font-style:italic;transform:scaleX(1.043);transform-origin:0 0;-webkit-text-stroke:1px #e8102a;">y</div>
<div class="t" style="left:1670.3px;top:986px;font-size:15.3px;color:#6c707e;transform:scaleX(0.912);transform-origin:0 0;">CRLF</div>
<div class="t" style="left:1727.5px;top:986px;font-size:15.3px;color:#6c707e;">UTF-8</div>
<div class="t" style="left:1789.5px;top:986px;font-size:15.3px;color:#6c707e;transform:scaleX(1.015);transform-origin:0 0;">4 spaces</div>
<svg style="left:1875px;top:987px" width="20" height="16" viewBox="0 0 20 16"><g fill="none" stroke="#6c707e" stroke-width="1.400"><rect x="1.500" y="7.500" width="12" height="9" rx="1.500"/><path d="M10.500 7.500V5c0-2 1.500-3.500 3.500-3.500s3.500 1.500 3.500 3.500v1.500"/></g><circle cx="7.500" cy="12" r="1.200" fill="#6c707e"/></svg>
<div class="abs" style="left:571px;top:-10px;width:1163px;height:665px;background:#fff;box-shadow:0 2px 7px rgba(0,0,0,.28)"></div>
<div class="abs" style="left:638px;top:0;width:1px;height:655px;background:#ebecf0"></div>
<div class="abs" style="left:571px;top:553.7px;width:1163px;height:32px;background:#f5f8fe"></div>
<div class="abs" style="left:638px;top:553.7px;width:1px;height:32px;background:#e4e6ee"></div>
<div class="abs" style="left:642px;top:214px;width:1092px;height:1px;background:#dcdde0"></div>
<div class="abs" style="left:685.5px;top:352px;width:1px;height:234px;background:#d6d7dc"></div>
<div class="abs" style="left:797px;top:46.500px;width:131.5px;height:34px;background:#fcf5da"></div>
<div class="t mono" style="left:641.5px;top:22.0px;color:#080808"><span class="an">@SpringBootTest</span></div>
<div class="t mono" style="left:641.5px;top:56.0px;color:#080808"><span class="kw">public class</span> QueryTest03 <span class="b1">{</span></div>
<div class="t mono" style="left:689.5px;top:123.0px;color:#080808"><span class="an">@Autowired</span></div>
<div class="t mono" style="left:689.5px;top:157.0px;color:#080808"><span class="kw">private</span> UserMapper <span class="fd">userMapper</span>;</div>
<div class="t mono" style="left:689.5px;top:224.0px;color:#080808"><span class="cm">// select age,count(*) as field_count from <span style="text-decoration:underline wavy #c4c6cc 1px;text-underline-offset:2.500px">rainbowsea</span>_user group by age;</span></div>
<div class="t mono" style="left:689.5px;top:258.0px;color:#080808"><span class="cm">// <span style="line-height:0;font-size:22px;font-family:'Liberation Serif','Noto Serif CJK SC',serif;letter-spacing:0.300px">分组查询</span></span></div>
<div class="t mono" style="left:689.5px;top:292.0px;color:#080808"><span class="an">@Test</span></div>
<div class="t mono" style="left:689.5px;top:326.0px;color:#080808"><span class="kw">void</span> <span class="md">groupBy</span><span class="b4">()</span> <span class="b2">{</span></div>
<div class="t mono" style="left:737.5px;top:359.0px;color:#080808">QueryWrapper<span class="b4">&lt;</span>User<span class="b4">&gt;</span> queryWrapper = <span class="kw">new</span> QueryWrapper<span class="b4">&lt;&gt;()</span>;</div>
<div class="t mono" style="left:737.5px;top:393.0px;color:#080808"><span class="cm">// <span style="line-height:0;font-size:22px;font-family:'Liberation Serif','Noto Serif CJK SC',serif;letter-spacing:0.300px">分组字段</span></span></div>
<div class="t mono" style="left:737.5px;top:427.0px;color:#080808">queryWrapper.groupBy<span class="b1">(</span></div>
<div class="t mono" style="left:1089.0px;top:427.0px;color:#080808"><span class="st">"age"</span><span class="b1">)</span>;</div>
<div class="t mono" style="left:737.5px;top:460.0px;color:#080808"><span class="cm">// <span style="line-height:0;font-size:22px;font-family:'Liberation Serif','Noto Serif CJK SC',serif;letter-spacing:0.300px">查询字段</span></span></div>
<div class="t mono" style="left:737.5px;top:494.0px;color:#080808">queryWrapper.select<span class="b4">(</span></div>
<div class="t mono" style="left:1102.3px;top:494.0px;color:#080808"><span class="st">"age,count(*) as field_count"</span><span class="b4">)</span>;</div>
<div class="t mono" style="left:737.5px;top:528.0px;color:#080808">List<span class="b4">&lt;</span>Map<span class="b2">&lt;</span>String, Object<span class="b2">&gt;</span><span class="b1">&gt;</span> maps = <span class="fd">userMapper</span>.selectMaps<span class="b4">(</span>queryWrapper<span class="b1">)</span>;</div>
<div class="t mono" style="left:737.5px;top:562.0px;color:#080808">System.<span class="fd" style="font-style:italic">out</span>.println<span class="b4">(</span>maps<span class="b1">)</span>;</div>
<div class="t mono" style="left:689.5px;top:595.0px;color:#080808"><span class="b2">}</span></div>
<div class="abs" style="left:1037px;top:556.500px;width:1.600px;height:27.500px;background:#000"></div>
<div class="abs" style="left:992px;top:420px;width:93px;height:28.500px;border-radius:5px;background:#f7f7f8"></div>
<div class="t" style="left:997.8px;top:425px;font-size:20.5px;color:#7a7e85;transform:scaleX(1.135);transform-origin:0 0;">column:</div>
<div class="abs" style="left:979px;top:487.5px;width:118px;height:28.500px;border-radius:5px;background:#f7f7f8"></div>
<div class="t" style="left:985.0px;top:492px;font-size:20.5px;color:#7a7e85;transform:scaleX(1.050);transform-origin:0 0;">…columns:</div>
<svg style="left:842.5px;top:22.5px" width="16" height="14" viewBox="0 0 16 14"><circle cx="8" cy="3.800" r="3.200" fill="#c4c6cc"/><path d="M1 13.500c0-3.500 3-5.500 7-5.500s7 2 7 5.500z" fill="#c4c6cc"/></svg>
<div class="t" style="left:865.3px;top:21px;font-size:21.5px;color:#7a7e85;transform:scaleX(1.018);transform-origin:0 0;">RainbowSea *</div>
<svg style="left:770.5px;top:292px" width="16" height="14" viewBox="0 0 16 14"><circle cx="8" cy="3.800" r="3.200" fill="#c4c6cc"/><path d="M1 13.500c0-3.500 3-5.500 7-5.500s7 2 7 5.500z" fill="#c4c6cc"/></svg>
<div class="t" style="left:792.5px;top:291px;font-size:21.5px;color:#3a5fc4;transform:scaleX(1.029);transform-origin:0 0;text-decoration:underline;text-decoration-thickness:1.300px;text-underline-offset:3px;">RainbowSea *</div>
<svg style="left:571px;top:51px;overflow:hidden" width="20" height="26" viewBox="0 0 20 26"><circle cx="3.500" cy="9.300" r="8.400" fill="#4aa35c"/><path d="M-1 10l3 3 6-7" fill="none" stroke="#fff" stroke-width="1.800"/><path d="M6.500 11.800l10 4.600-9.500 6z" fill="#e2f5e2" stroke="#2e8b57" stroke-width="1.500" stroke-linejoin="round"/></svg>
<svg style="left:571px;top:321px;overflow:hidden" width="20" height="26" viewBox="0 0 20 26"><circle cx="3.500" cy="9.300" r="8.400" fill="#4aa35c"/><path d="M-1 10l3 3 6-7" fill="none" stroke="#fff" stroke-width="1.800"/><path d="M6.500 11.800l10 4.600-9.500 6z" fill="#e2f5e2" stroke="#2e8b57" stroke-width="1.500" stroke-linejoin="round"/></svg>
<div class="abs" style="left:865.5px;top:402px;width:309.5px;height:51.5px;border:2px solid #cf2433"></div>
<div class="abs" style="left:888.500px;top:475px;width:588px;height:45px;border:2px solid #cf2433;border-bottom:none"></div>
<div class="abs" style="left:671.5px;top:518px;width:910.0px;height:36.5px;border:2px solid #cf2433"></div>
<div class="abs" style="left:382.5px;top:781px;width:451.5px;height:60.5px;border:2px solid #cf2433"></div>
<div class="abs" style="left:1190.5px;top:794.5px;width:74.5px;height:55.5px;border:2px solid #cf2433"></div>
<svg style="left:0;top:0" width="1895" height="1003" viewBox="0 0 1895 1003"><path d="M1025 448.500 L1027 447.500 L1189 771 L1192.800 767 L1192.800 794 L1171.700 777.400 L1176 774 Z" fill="#ea1f28"/></svg>
<div class="t" style="left:1468.3px;top:955px;font-size:31.5px;color:rgba(255,255,255,.75);transform:scaleX(1.089);transform-origin:0 0;text-shadow:1px 1px 2px rgba(0,0,0,.4),0 0 1px rgba(0,0,0,.25);">CSDN @ChinaRainbowSea</div>
<div class="t" style="left:1535.7px;top:952px;font-size:24px;color:#fff;transform:scaleX(1.046);transform-origin:0 0;text-shadow:1.200px 1.200px 0.600px #222,0 0 1px #555;">掘金技术社区 @ RainbowSea</div>
</div></body></html>
